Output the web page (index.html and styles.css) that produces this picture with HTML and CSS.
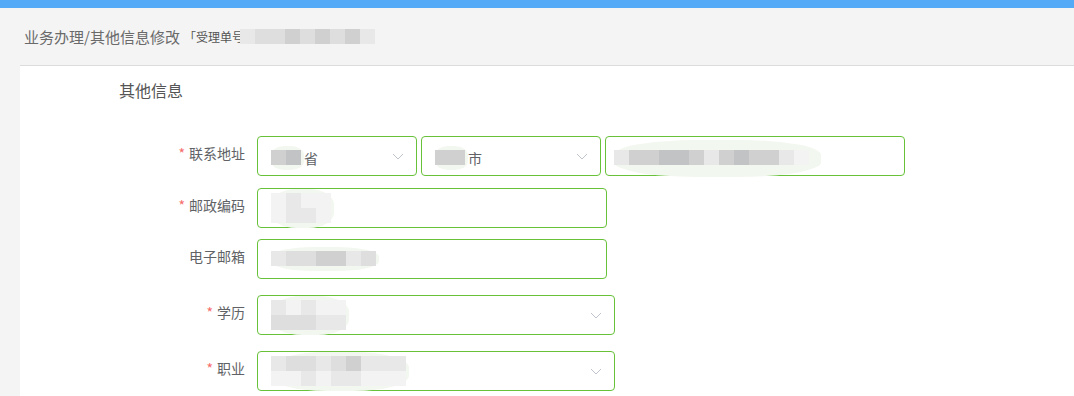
FILE: index.html
```html
<!DOCTYPE html>
<html lang="zh-CN">
<head>
    <meta charset="UTF-8">
    <title>其他信息修改</title>
    <link rel="stylesheet" href="styles.css">
</head>
<body>
    <div class="topbar"></div>
    <div class="crumbs">
        <span class="crumb-main">业务办理/其他信息修改</span>
        <span class="crumb-sub">「受理单号</span>
        <span class="mosaic crumb-mosaic">
            <i class="g1"></i><i class="g2"></i><i class="g2"></i><i class="g3"></i><i class="g2"></i><i class="g3"></i><i class="g2"></i><i class="g3"></i><i class="g1"></i>
        </span>
    </div>

    <div class="main">
        <div class="section-title">其他信息</div>

        <div class="form">
            <!-- 联系地址 -->
            <div class="form-row row-addr">
                <label class="form-label"><span class="req">*</span>联系地址</label>
                <div class="form-field">
                    <div class="box select w-prov">
                        <span class="val">
                            <span class="mosaic smear"><i class="g3"></i><i class="g4"></i></span>省
                        </span>
                        <svg class="arrow" width="12" height="7" viewBox="0 0 12 7"><polyline points="1,1 6,6 11,1" fill="none" stroke="#c0c4cc" stroke-width="1"/></svg>
                    </div>
                    <div class="box select w-city">
                        <span class="val">
                            <span class="mosaic smear"><i class="g3"></i><i class="g3"></i></span>市
                        </span>
                        <svg class="arrow" width="12" height="7" viewBox="0 0 12 7"><polyline points="1,1 6,6 11,1" fill="none" stroke="#c0c4cc" stroke-width="1"/></svg>
                    </div>
                    <div class="box w-street">
                        <span class="mosaic smear wide">
                            <i class="g1"></i><i class="g3"></i><i class="g3"></i><i class="g4"></i><i class="g4"></i><i class="g3"></i><i class="g1"></i><i class="g3"></i><i class="g4"></i><i class="g3"></i><i class="g3"></i><i class="g1"></i><i class="g0"></i>
                        </span>
                    </div>
                </div>
            </div>

            <!-- 邮政编码 -->
            <div class="form-row row-zip">
                <label class="form-label"><span class="req">*</span>邮政编码</label>
                <div class="box w-text">
                    <span class="mosaic smear tall">
                        <span class="mrow"><i class="g0"></i><i class="g1"></i><i class="g0"></i><i class="g0"></i></span>
                        <span class="mrow"><i class="g0"></i><i class="g1"></i><i class="g1"></i><i class="g0"></i></span>
                    </span>
                </div>
            </div>

            <!-- 电子邮箱 -->
            <div class="form-row row-mail">
                <label class="form-label">电子邮箱</label>
                <div class="box w-text">
                    <span class="mosaic smear">
                        <i class="g1"></i><i class="g2"></i><i class="g2"></i><i class="g3"></i><i class="g3"></i><i class="g1"></i><i class="g2"></i>
                    </span>
                </div>
            </div>

            <!-- 学历 -->
            <div class="form-row row-edu">
                <label class="form-label"><span class="req">*</span>学历</label>
                <div class="box select w-long">
                    <span class="mosaic smear tall">
                        <span class="mrow"><i class="g1"></i><i class="g0"></i><i class="g1"></i><i class="g0"></i><i class="g0"></i></span>
                        <span class="mrow"><i class="g2"></i><i class="g2"></i><i class="g2"></i><i class="g1"></i><i class="g1"></i></span>
                    </span>
                    <svg class="arrow" width="12" height="7" viewBox="0 0 12 7"><polyline points="1,1 6,6 11,1" fill="none" stroke="#c0c4cc" stroke-width="1"/></svg>
                </div>
            </div>

            <!-- 职业 -->
            <div class="form-row row-job">
                <label class="form-label"><span class="req">*</span>职业</label>
                <div class="box select w-long">
                    <span class="mosaic smear tall">
                        <span class="mrow"><i class="g1"></i><i class="g2"></i><i class="g2"></i><i class="g1"></i><i class="g2"></i><i class="g3"></i><i class="g1"></i><i class="g1"></i><i class="g1"></i></span>
                        <span class="mrow"><i class="g0"></i><i class="g0"></i><i class="g1"></i><i class="g0"></i><i class="g1"></i><i class="g1"></i><i class="g0"></i><i class="g0"></i><i class="g0"></i></span>
                    </span>
                    <svg class="arrow" width="12" height="7" viewBox="0 0 12 7"><polyline points="1,1 6,6 11,1" fill="none" stroke="#c0c4cc" stroke-width="1"/></svg>
                </div>
            </div>
        </div>
    </div>
</body>
</html>
```

FILE: styles.css
```css
body {
    margin: 0;
    background-color: #f4f4f4;
    font-family: "Microsoft YaHei", "Noto Sans CJK SC", "Liberation Sans", sans-serif;
    color: #606266;
    overflow: hidden;
}

.topbar {
    height: 8px;
    background-color: #55aaf8;
}

/* breadcrumb strip */
.crumbs {
    height: 57px;
    padding-left: 24px;
    display: flex;
    align-items: center;
}

.crumb-main {
    font-size: 15px;
    color: #6a6a6a;
}

.crumb-sub {
    font-size: 12px;
    color: #555;
    margin-left: 4px;
}

.crumb-mosaic {
    margin-left: -4px;
}

.main {
    margin-left: 20px;
    background-color: #fff;
    border-top: 1px solid #dcdcdc;
    height: 340px;
}

.section-title {
    padding-left: 99px;
    margin-top: 12px;
    font-size: 16px;
    font-weight: normal;
    line-height: 24px;
    color: #555;
}

.form {
    margin-top: 34px;
}

.form-row {
    display: flex;
    align-items: flex-start;
}

.row-zip { margin-top: 12px; }
.row-mail { margin-top: 11px; }
.row-edu { margin-top: 16px; }
.row-job { margin-top: 16px; }

.form-label {
    width: 237px;
    padding-right: 12px;
    box-sizing: border-box;
    text-align: right;
    font-size: 14px;
    line-height: 34px;
    color: #606266;
}

.req {
    color: #f56c6c;
    margin-right: 4px;
}

.form-field {
    display: flex;
    gap: 4px;
}

.box {
    height: 40px;
    box-sizing: border-box;
    border: 1px solid #67c23a;
    border-radius: 4px;
    display: flex;
    align-items: center;
    padding: 0 12px 0 13px;
    font-size: 14px;
    color: #606266;
}

.select {
    justify-content: space-between;
}

.w-prov { width: 160px; }
.w-city { width: 180px; }
.w-street { width: 300px; padding-left: 8px; }
.w-text { width: 350px; }
.w-long { width: 358px; }

.val {
    display: flex;
    align-items: center;
    margin-top: 3px;
}

.arrow {
    margin-top: 1px;
}

/* pixelated blur over hidden values */
.mosaic {
    display: inline-flex;
    flex-direction: row;
}

.mosaic i {
    display: block;
    width: 15px;
    height: 15px;
}

.mosaic .mrow {
    display: flex;
}

.tall {
    flex-direction: column;
}

.smear {
    background-color: #f2f7ef;
    border-radius: 40%;
    padding: 4px 3px 5px 0;
}

.wide {
    padding: 10px 12px 12px 0;
    margin-top: 4px;
}

.g0 { background-color: #f3f3f3; }
.g1 { background-color: #e8e8e8; }
.g2 { background-color: #dedede; }
.g3 { background-color: #d0d0d1; }
.g4 { background-color: #c2c3c5; }
```
